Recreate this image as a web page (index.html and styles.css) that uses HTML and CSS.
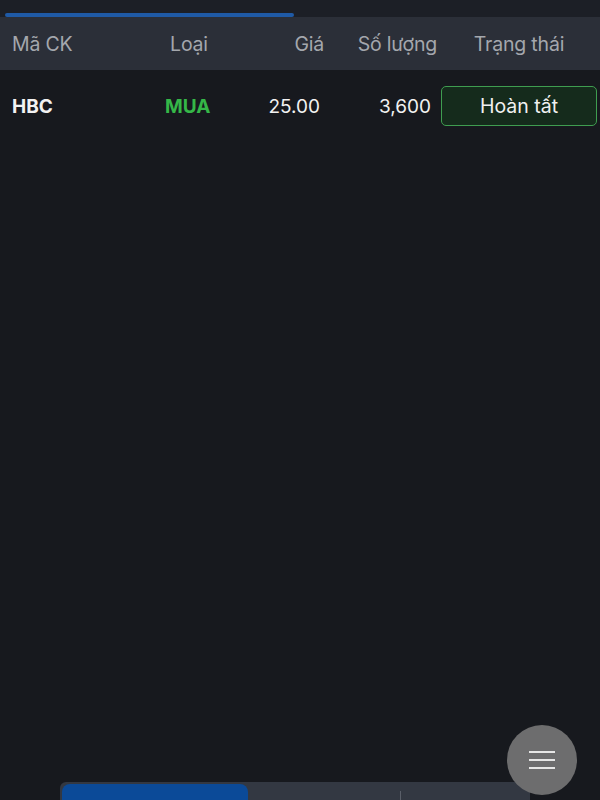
FILE: index.html
```html
<!DOCTYPE html>
<html lang="vi">
<head>
    <meta charset="UTF-8">
    <meta name="viewport" content="width=device-width, initial-scale=1.0">
    <title>Lệnh đặt</title>
    <link rel="stylesheet" href="styles.css">
</head>
<body>

<div class="tabs">
    <div class="tab-line"></div>
</div>

<div class="table-head">
    <span class="c-code">Mã CK</span>
    <span class="c-type">Loại</span>
    <span class="c-price">Giá</span>
    <span class="c-qty">Số lượng</span>
    <span class="c-status">Trạng thái</span>
</div>

<div class="list">
    <div class="row">
        <span class="c-code sym">HBC</span>
        <span class="c-type buy">MUA</span>
        <span class="c-price">25.00</span>
        <span class="c-qty qty">3,600</span>
        <span class="c-status"><span class="badge">Hoàn tất</span></span>
    </div>
</div>

<nav class="bottom-nav">
    <div class="nav-bar">
        <div class="nav-item active"></div>
        <div class="nav-item"></div>
        <div class="nav-item last"></div>
    </div>
</nav>

<button class="fab" aria-label="Menu">
    <svg width="26" height="20" viewBox="0 0 26 20">
        <path d="M0 2h26M0 10h26M0 18h26" stroke="#e6e6e6" stroke-width="2.2"/>
    </svg>
</button>

</body>
</html>
```

FILE: styles.css
```css
body {
    margin: 0;
    height: 800px;
    display: flex;
    flex-direction: column;
    background: #17191e;
    font-family: Inter, Roboto, "Noto Sans", sans-serif;
    overflow: hidden;
}
.tabs {
    height: 17px;
    background: #1c1f26;
    display: flex;
    align-items: flex-end;
    padding-left: 5px;
}
.tab-line {
    width: 289px;
    height: 4px;
    background: #1f5aa6;
    border-radius: 2px;
}
.table-head,
.row {
    display: grid;
    grid-template-columns: 128px 98px 86px 113px 1fr;
    align-items: center;
    padding-left: 12px;
    padding-right: 3px;
}
.table-head {
    height: 53px;
    background: #2b2f38;
    color: #a4a7ad;
    font-size: 19.5px;
    letter-spacing: -0.2px;
}
.c-type {
    text-align: center;
}
.c-price,
.c-qty {
    text-align: right;
}
.c-status {
    padding-left: 4px;
    text-align: center;
}
.list {
    flex: 1;
}
.row {
    height: 72px;
    color: #f2f2f2;
    font-size: 19px;
}
.sym {
    font-weight: 700;
}
.buy {
    color: #35b748;
    font-weight: 700;
    text-align: left;
    padding-left: 25px;
}
.row .c-price {
    padding-right: 4px;
}
.qty {
    padding-right: 6px;
}
.badge {
    display: block;
    height: 38px;
    line-height: 38px;
    border: 1px solid #3f9d50;
    border-radius: 5px;
    background: #152b1c;
    color: #f0f0f0;
    font-size: 19.5px;
}
.bottom-nav {
    height: 18px;
    padding-left: 60px;
    overflow: hidden;
}
.nav-bar {
    width: 470px;
    height: 40px;
    background: #333842;
    border-radius: 6px 6px 0 0;
    display: flex;
    padding: 2px 0 0 2px;
    box-sizing: border-box;
}
.nav-item {
    flex: none;
    width: 153px;
    position: relative;
}
.nav-item.active {
    width: 186px;
    background: #0b4a98;
    border-radius: 8px 8px 0 0;
}
.nav-item.last {
    flex: 1;
}
.nav-item:nth-child(2)::after {
    content: "";
    position: absolute;
    right: 0;
    top: 7px;
    width: 1px;
    height: 20px;
    background: #5a5f69;
}
.fab {
    position: absolute;
    left: 507px;
    top: 725px;
    width: 70px;
    height: 70px;
    border: none;
    border-radius: 50%;
    background: #6d6d6e;
    display: flex;
    align-items: center;
    justify-content: center;
    padding: 0;
}
```
